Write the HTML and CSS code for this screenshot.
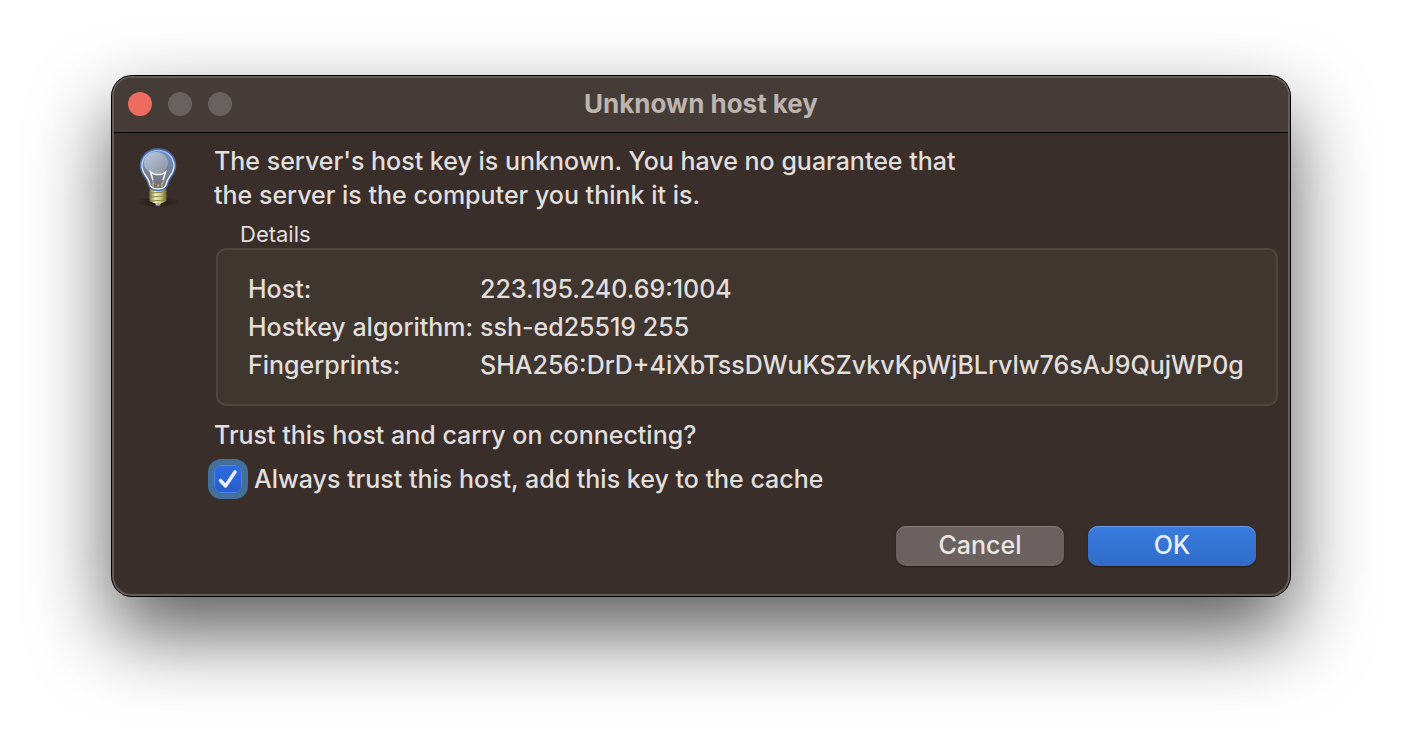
FILE: index.html
```html
<!DOCTYPE html>
<html lang="en">
<head>
<meta charset="utf-8">
<meta name="viewport" content="width=device-width, initial-scale=1">
<title>Unknown host key</title>
<link rel="stylesheet" href="styles.css">
</head>
<body>
<main class="dialog" role="dialog" aria-labelledby="dialog-title">
  <header class="titlebar">
    <div class="window-controls">
      <button class="control control-close" type="button" aria-label="Close"></button>
      <button class="control" type="button" aria-label="Minimize" disabled></button>
      <button class="control" type="button" aria-label="Zoom" disabled></button>
    </div>
    <h1 class="title" id="dialog-title">Unknown host key</h1>
  </header>
  <form class="content">
    <svg class="bulb" viewBox="0 0 48 64" aria-hidden="true">
      <defs>
        <linearGradient id="glass" x1="0" y1="0" x2="0" y2="1">
          <stop offset="0" stop-color="#6a8fcb"/>
          <stop offset=".5" stop-color="#76819a"/>
          <stop offset="1" stop-color="#77706c"/>
        </linearGradient>
        <linearGradient id="rim" x1="0" y1="0" x2="0" y2="1">
          <stop offset="0" stop-color="#8fb4ee"/>
          <stop offset=".45" stop-color="#d3def2"/>
          <stop offset="1" stop-color="#eef1f6"/>
        </linearGradient>
        <linearGradient id="shine" x1="0" y1="0" x2="1" y2="1">
          <stop offset="0" stop-color="#b9c9e4"/>
          <stop offset="1" stop-color="#8b909b"/>
        </linearGradient>
        <linearGradient id="screw" x1="0" y1="0" x2="1" y2="0">
          <stop offset="0" stop-color="#77723f"/>
          <stop offset=".35" stop-color="#f0eebc"/>
          <stop offset=".65" stop-color="#d0cc83"/>
          <stop offset="1" stop-color="#67622f"/>
        </linearGradient>
        <radialGradient id="ground">
          <stop offset="0" stop-color="#000" stop-opacity=".5"/>
          <stop offset="1" stop-color="#000" stop-opacity="0"/>
        </radialGradient>
      </defs>
      <ellipse cx="24" cy="56" rx="22" ry="6" fill="url(#ground)"/>
      <path d="M20 56h8l-2 4h-4z" fill="#b5b5b5" stroke="#44413d"/>
      <path d="M15.500 43h17v12l-4 2h-9l-4-2z" fill="url(#screw)"/>
      <path d="M15.500 47l17-1M15.500 51l17-1M16 55l16-1" stroke="#8d874a" stroke-width="1" fill="none"/>
      <path d="M24 3.500C14 3.500 7 10.500 7 20C7 28 13.500 31 14.500 37C15.500 42 19 44 24 44C29 44 32.500 42 33.500 37C34.500 31 41 28 41 20C41 10.500 34 3.500 24 3.500z" fill="url(#glass)" stroke="#4a6ba8" stroke-width="2.500"/>
      <path d="M24 4.500C15 4.500 8 11 8 20C8 28 14.500 31 15.500 37C16 41 19 43 24 43C29 43 32 41 32.500 37C33.500 31 40 28 40 20C40 11 33 4.500 24 4.500z" fill="none" stroke="url(#rim)" stroke-width="1.500"/>
      <ellipse cx="22" cy="17" rx="12" ry="11" fill="url(#shine)"/>
      <path d="M19 41v-4M24 41v-3M28 41v-4" stroke="#b5b176" stroke-width="1.500"/>
      <path d="M19.500 38L16.500 26M28.500 38L31.500 26" fill="none" stroke="#bbb" stroke-width="1"/>
      <path d="M19 34L16.500 26Q20 29 24 28.500Q28 29 31.500 26L29 34" fill="none" stroke="#f4f4f4" stroke-width="1.500"/>
    </svg>
    <div class="body">
      <p class="message">The server's host key is unknown. You have no guarantee that<br>the server is the computer you think it is.</p>
      <section class="details" aria-labelledby="details-title">
        <h2 class="details-title" id="details-title">Details</h2>
        <dl class="details-box">
          <dt>Host:</dt><dd>223.195.240.69:1004</dd>
          <dt>Hostkey algorithm:</dt><dd>ssh-ed25519 255</dd>
          <dt>Fingerprints:</dt><dd>SHA256:DrD+4iXbTssDWuKSZvkvKpWjBLrvlw76sAJ9QujWP0g</dd>
        </dl>
      </section>
      <p class="question">Trust this host and carry on connecting?</p>
      <div class="trust">
        <span class="check">
          <input class="check-input" type="checkbox" id="always-trust" checked>
          <svg class="check-mark" viewBox="0 0 28 28" aria-hidden="true"><path d="M6.500 15.500L11.500 21L21 7" fill="none" stroke="#e8eefb" stroke-width="3.500" stroke-linecap="round" stroke-linejoin="round"/></svg>
        </span>
        <label for="always-trust">Always trust this host, add this key to the cache</label>
      </div>
      <div class="actions">
        <button class="button" type="button">Cancel</button>
        <button class="button button-primary" type="submit">OK</button>
      </div>
    </div>
  </form>
</main>
</body>
</html>
```
FILE: styles.css
```css
* {
  box-sizing: border-box;
}

body {
  min-height: 100vh;
  margin: 0;
  padding: 76px 112px;
  overflow-x: hidden;
  background: #fff;
  color: #e1dfde;
  font: 500 25px/34px Inter, "Liberation Sans", sans-serif;
}

h1, h2, p, dl, dd {
  margin: 0;
}

.dialog {
  border: 2px solid #655b57;
  border-radius: 20px;
  background: #3a2e2a;
  box-shadow: 0 0 0 1px #000, 0 36px 80px rgba(0, 0, 0, .65);
}

.titlebar {
  display: grid;
  grid-template-columns: 1fr auto 1fr;
  align-items: center;
  height: 55px;
  padding: 0 14px 2px;
  border-bottom: 1px solid #000;
  border-radius: 18px 18px 0 0;
  background: #453c37;
}

.window-controls {
  display: flex;
  gap: 16px;
}

.control {
  width: 24px;
  height: 24px;
  padding: 0;
  border: 0;
  border-radius: 50%;
  background: #69615d;
}

.control-close {
  background: #ed6a5f;
}

.title {
  color: #bdb4af;
  font-size: 26px;
  font-weight: 700;
  line-height: 34px;
}

.content {
  display: grid;
  grid-template-columns: 100px 1fr;
  padding: 11px 10px 28px 0;
}

.bulb {
  width: 48px;
  height: 64px;
  margin: 2px 0 0 20px;
}

.details-title {
  margin-left: 26px;
  padding-top: 8px;
  font-size: 22px;
  font-weight: 400;
  line-height: 28px;
}

.details-box {
  display: grid;
  grid-template-columns: 232px 1fr;
  row-gap: 4px;
  margin-left: 2px;
  padding: 22px 30px;
  border: 2px solid #51463f;
  border-radius: 10px;
  background: #403630;
  white-space: nowrap;
}

.question {
  margin-top: 12px;
}

.trust {
  display: flex;
  align-items: center;
  gap: 12px;
  margin-top: 10px;
}

.check {
  position: relative;
  display: flex;
}

.check-input {
  appearance: none;
  width: 28px;
  height: 28px;
  margin: 0;
  border: 1px solid #4a86ee;
  border-radius: 7px;
  background: linear-gradient(#2e6ae0, #2a5ccb);
  box-shadow: 0 0 0 6px #42709a;
}

.check-mark {
  position: absolute;
  inset: 0;
  pointer-events: none;
}

.actions {
  display: flex;
  justify-content: flex-end;
  gap: 24px;
  margin-top: 30px;
  padding-right: 22px;
}

.button {
  width: 168px;
  height: 40px;
  padding: 0 0 2px;
  border: 0;
  border-radius: 10px;
  background: #6b625f;
  box-shadow: inset 0 1px #857d7a, 0 1px 2px rgba(0, 0, 0, .4);
  color: #e9e7e6;
  font: inherit;
}

.button-primary {
  background: linear-gradient(#387be0, #306cc6);
  box-shadow: inset 0 1px #6a9de8, 0 1px 2px rgba(0, 0, 0, .4);
  color: #e8effb;
}
```
